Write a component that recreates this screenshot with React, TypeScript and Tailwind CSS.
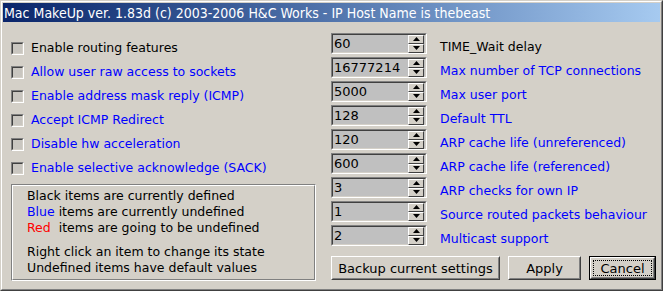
import React from 'react';

const checks = [
  { label: 'Enable routing features', defined: true },
  { label: 'Allow user raw access to sockets', defined: false },
  { label: 'Enable address mask reply (ICMP)', defined: false },
  { label: 'Accept ICMP Redirect', defined: false },
  { label: 'Disable hw acceleration', defined: false },
  { label: 'Enable selective acknowledge (SACK)', defined: false },
];

const spins = [
  { value: '60', label: 'TIME_Wait delay', defined: true },
  { value: '16777214', label: 'Max number of TCP connections', defined: false },
  { value: '5000', label: 'Max user port', defined: false },
  { value: '128', label: 'Default TTL', defined: false },
  { value: '120', label: 'ARP cache life (unreferenced)', defined: false },
  { value: '600', label: 'ARP cache life (referenced)', defined: false },
  { value: '3', label: 'ARP checks for own IP', defined: false },
  { value: '1', label: 'Source routed packets behaviour', defined: false },
  { value: '2', label: 'Multicast support', defined: false },
];

const font = { fontFamily: '"DejaVu Sans", Verdana, sans-serif' };

const CheckBox: React.FC = () => (
  <div className="w-[13px] h-[13px] shrink-0 border border-t-[#808080] border-l-[#808080] border-r-white border-b-white">
    <div className="w-full h-full border border-t-[#404040] border-l-[#404040] border-r-[#d4d0c8] border-b-[#d4d0c8] bg-[#c9c6c0]" />
  </div>
);

const SpinButton: React.FC<{ up?: boolean }> = ({ up }) => (
  <div className="w-[16px] h-[9px] bg-[#d4d0c8] border border-t-white border-l-white border-r-[#404040] border-b-[#404040] flex items-center justify-center">
    <svg width="7" height="4" viewBox="0 0 7 4">
      {up ? <polygon points="3.5,0 7,4 0,4" fill="#000" /> : <polygon points="0,0 7,0 3.5,4" fill="#000" />}
    </svg>
  </div>
);

const SpinBox: React.FC<{ value: string }> = ({ value }) => (
  <div className="w-[96px] h-[21px] shrink-0 border border-t-[#808080] border-l-[#808080] border-r-white border-b-white">
    <div className="w-full h-full border border-t-[#404040] border-l-[#404040] border-r-[#d4d0c8] border-b-[#d4d0c8] bg-[#c0c0c0] flex items-center justify-between pr-[1px]">
      <span className="pl-[1px] text-[13px] text-black leading-none">{value}</span>
      <div className="flex flex-col">
        <SpinButton up />
        <SpinButton />
      </div>
    </div>
  </div>
);

const Button: React.FC<{ children: React.ReactNode; width: string; isDefault?: boolean }> = ({ children, width, isDefault }) => (
  <div className={`${width} h-[24px] ${isDefault ? 'border border-black' : ''}`}>
    <div className="w-full h-full border border-t-white border-l-white border-r-[#404040] border-b-[#404040] bg-[#d4d0c8]">
      <div className="w-full h-full border border-t-[#d4d0c8] border-l-[#d4d0c8] border-r-[#808080] border-b-[#808080] flex items-center justify-center">
        {isDefault ? (
          <div className="w-full h-full p-[1px]">
            <div className="w-full h-full border border-dotted border-black flex items-center justify-center text-[13px] leading-none">
              {children}
            </div>
          </div>
        ) : (
          <span className="text-[13px] leading-none">{children}</span>
        )}
      </div>
    </div>
  </div>
);

export default function App() {
  return (
    <div className="w-[663px] h-[291px] overflow-hidden border border-t-[#d4d0c8] border-l-[#d4d0c8] border-r-[#404040] border-b-[#404040]" style={font}>
      <div className="w-full h-full border border-t-white border-l-white border-r-[#808080] border-b-[#808080] bg-[#d4d0c8] p-[1px] flex flex-col">
        <div className="h-[19px] shrink-0 bg-gradient-to-r from-[#0a246a] to-[#a6caf0] flex items-center pl-[1px]">
          <span className="text-white text-[14px] leading-none" style={{ fontFamily: '"DejaVu Sans Condensed", Tahoma, sans-serif' }}>
            Mac MakeUp ver. 1.83d (c) 2003-2006 H&amp;C Works - IP Host Name is thebeast
          </span>
        </div>
        <div className="flex flex-1 text-[12.5px]">
          <div className="w-[320px] pl-[8px] pt-[14px] flex flex-col">
            <div className="flex flex-col">
              {checks.map((c) => (
                <div key={c.label} className="h-[24px] flex items-center gap-[7px]">
                  <CheckBox />
                  <span className={c.defined ? 'text-black' : 'text-[#0000ff]'}>{c.label}</span>
                </div>
              ))}
            </div>
            <div className="mt-[4px] w-[305px] h-[97px] border border-t-[#808080] border-l-[#808080] border-r-white border-b-white">
              <div className="w-full h-full border border-t-white border-l-white border-r-[#808080] border-b-[#808080] pl-[14px] pt-[2px] leading-[16px]">
                <div>Black items are currently defined</div>
                <div>
                  <span className="text-[#0000ff]">Blue</span> items are currently undefined
                </div>
                <div>
                  <span className="text-[#ff0000]">Red</span>&nbsp; items are going to be undefined
                </div>
                <div className="mt-[8px]">Right click an item to change its state</div>
                <div>Undefined items have default values</div>
              </div>
            </div>
          </div>
          <div className="pl-[8px] pt-[11px] flex flex-col">
            <div className="flex flex-col gap-[3px]">
              {spins.map((s) => (
                <div key={s.label} className="h-[21px] flex items-start">
                  <SpinBox value={s.value} />
                  <span className={`ml-[13px] pt-[8px] leading-none whitespace-nowrap ${s.defined ? 'text-black' : 'text-[#0000ff]'}`}>{s.label}</span>
                </div>
              ))}
            </div>
            <div className="flex mt-[10px] gap-[8px]">
              <Button width="w-[169px]">Backup current settings</Button>
              <Button width="w-[73px]">Apply</Button>
              <Button width="w-[67px]" isDefault>Cancel</Button>
            </div>
          </div>
        </div>
      </div>
    </div>
  );
}
